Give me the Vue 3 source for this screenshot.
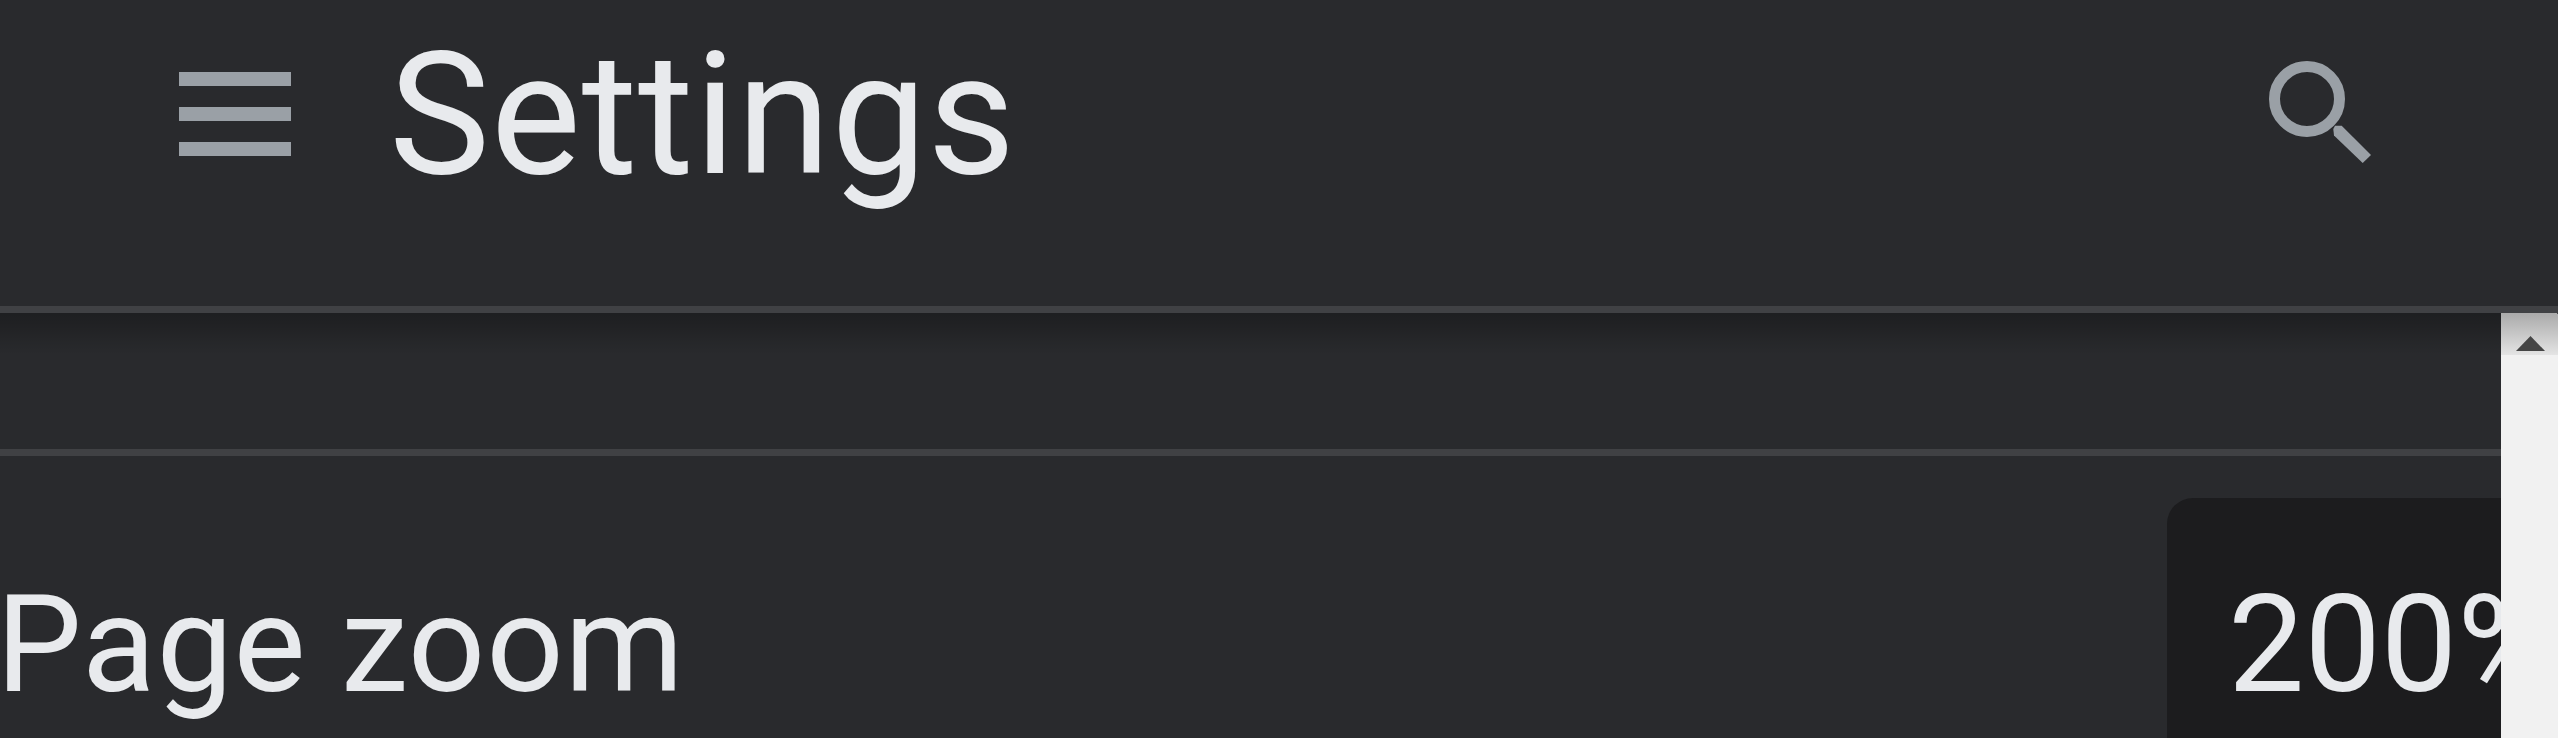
<template>
  <div class="page">
    <header class="toolbar">
      <button class="menu-btn" aria-label="Menu">
        <svg width="112" height="84" viewBox="0 0 112 84">
          <rect y="0" width="112" height="14" />
          <rect y="35" width="112" height="14" />
          <rect y="70" width="112" height="14" />
        </svg>
      </button>
      <h1 class="title">Settings</h1>
      <button class="search-btn" aria-label="Search">
        <svg width="104" height="104" viewBox="0 0 104 104">
          <circle class="lens" cx="38" cy="38" r="32.5" />
          <polygon points="66,64.7 72.7,64.7 102,94 93.7,102 65,74.5 64.3,68" />
        </svg>
      </button>
    </header>

    <div class="body">
      <main class="content">
        <div class="shadow"></div>
        <div class="spacer"></div>
        <section class="row">
          <span class="label">Page zoom</span>
          <div class="select">200%</div>
        </section>
      </main>
      <aside class="scrollbar">
        <div class="scroll-up">
          <svg width="29" height="15" viewBox="0 0 29 15"><polygon points="14.5,0 29,15 0,15" /></svg>
        </div>
      </aside>
    </div>
  </div>
</template>

<script setup>
</script>

<style>
html, body {
  margin: 0;
  background: #292a2d;
  overflow: hidden;
}
</style>

<style scoped>
.page {
  width: 2558px;
  height: 738px;
  display: flex;
  flex-direction: column;
  overflow: hidden;
  background: #292a2d;
  color: #e8eaed;
  font-family: Roboto, "Liberation Sans", sans-serif;
}

.toolbar {
  height: 306px;
  flex: none;
  display: flex;
  align-items: flex-start;
  padding-left: 179px;
  border-bottom: 7px solid #404144;
}

button {
  border: 0;
  padding: 0;
  background: none;
  display: block;
}

svg {
  display: block;
}

.menu-btn {
  margin-top: 72px;
  fill: #9aa0a6;
}

.title {
  margin: 3px 0 0 98px;
  font-size: 170px;
  font-weight: 400;
  letter-spacing: 0.8px;
  line-height: 224px;
}

.search-btn {
  position: absolute;
  left: 2269px;
  top: 61px;
  fill: #9aa0a6;
}

.lens {
  fill: none;
  stroke: #9aa0a6;
  stroke-width: 11;
}

.body {
  flex: 1;
  display: flex;
  min-height: 0;
}

.content {
  position: relative;
  flex: 1;
  min-width: 0;
  overflow: hidden;
}

.shadow {
  position: absolute;
  left: 0;
  right: 0;
  top: 0;
  height: 42px;
  background: linear-gradient(rgba(0, 0, 0, 0.28), rgba(0, 0, 0, 0.2) 30%, rgba(0, 0, 0, 0.09) 65%, rgba(0, 0, 0, 0));
  pointer-events: none;
}

.spacer {
  height: 136px;
  border-bottom: 7px solid #404144;
}

.row {
  display: flex;
  align-items: flex-start;
  justify-content: space-between;
  padding-top: 42px;
}

.label {
  margin: 65px 0 0 -4px;
  font-size: 136px;
  letter-spacing: 0.7px;
  line-height: 164px;
}

.select {
  flex: none;
  width: 500px;
  margin-right: -166px;
  height: 300px;
  padding: 65px 0 0 61px;
  box-sizing: border-box;
  background: #1c1c1e;
  border-radius: 26px;
  font-size: 136px;
  line-height: 164px;
}

.scrollbar {
  width: 57px;
  flex: none;
  background: #f1f1f1;
  border-top-right-radius: 3px;
  overflow: hidden;
}

.scroll-up {
  height: 42px;
  box-sizing: border-box;
  padding: 23px 0 0 15px;
  background: linear-gradient(#aaaaaa, #e4e4e4);
  fill: #454545;
}
</style>
